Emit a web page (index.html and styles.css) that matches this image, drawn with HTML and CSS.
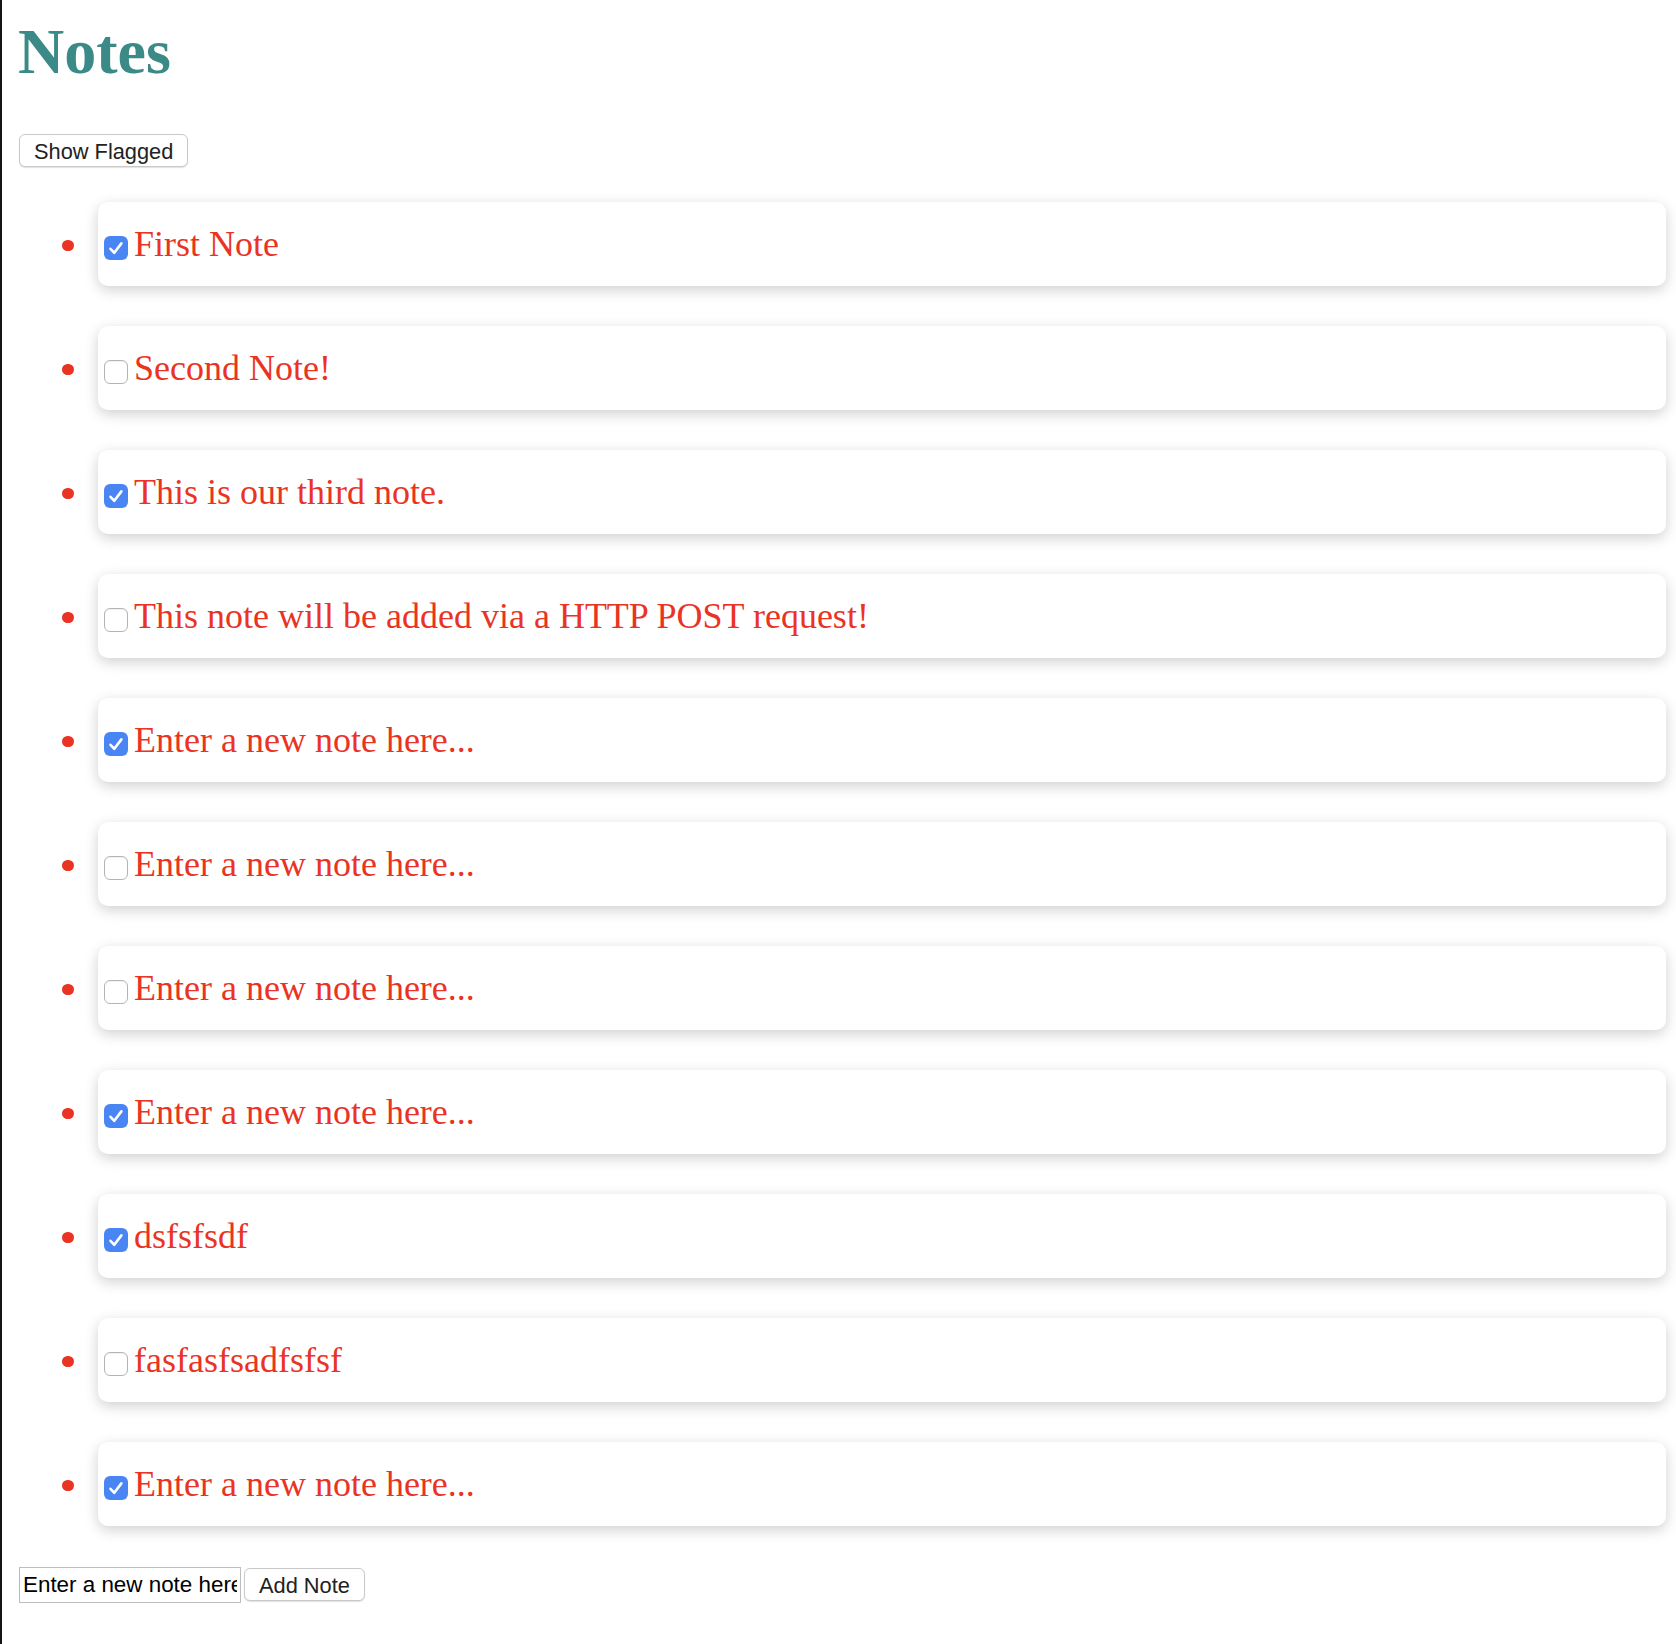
FILE: index.html
```html
<!DOCTYPE html>
<html lang="en">
<head>
<meta charset="utf-8">
<title>Notes</title>
<link rel="stylesheet" href="styles.css">
</head>
<body>
<h1 class="title">Notes</h1>
<button class="btn btn-flag" type="button">Show Flagged</button>
<ul class="notes">
  <li class="note"><div class="card"><span class="box checked"><svg viewBox="0 0 24 24" width="24" height="24"><path d="M6.5 12.8 L10.3 16.8 L17.4 7.4" fill="none" stroke="#fff" stroke-width="2.6" stroke-linecap="round" stroke-linejoin="round"/></svg></span><span class="text">First Note</span></div></li>
  <li class="note"><div class="card"><span class="box"></span><span class="text">Second Note!</span></div></li>
  <li class="note"><div class="card"><span class="box checked"><svg viewBox="0 0 24 24" width="24" height="24"><path d="M6.5 12.8 L10.3 16.8 L17.4 7.4" fill="none" stroke="#fff" stroke-width="2.6" stroke-linecap="round" stroke-linejoin="round"/></svg></span><span class="text">This is our third note.</span></div></li>
  <li class="note"><div class="card"><span class="box"></span><span class="text">This note will be added via a HTTP POST request!</span></div></li>
  <li class="note"><div class="card"><span class="box checked"><svg viewBox="0 0 24 24" width="24" height="24"><path d="M6.5 12.8 L10.3 16.8 L17.4 7.4" fill="none" stroke="#fff" stroke-width="2.6" stroke-linecap="round" stroke-linejoin="round"/></svg></span><span class="text">Enter a new note here...</span></div></li>
  <li class="note"><div class="card"><span class="box"></span><span class="text">Enter a new note here...</span></div></li>
  <li class="note"><div class="card"><span class="box"></span><span class="text">Enter a new note here...</span></div></li>
  <li class="note"><div class="card"><span class="box checked"><svg viewBox="0 0 24 24" width="24" height="24"><path d="M6.5 12.8 L10.3 16.8 L17.4 7.4" fill="none" stroke="#fff" stroke-width="2.6" stroke-linecap="round" stroke-linejoin="round"/></svg></span><span class="text">Enter a new note here...</span></div></li>
  <li class="note"><div class="card"><span class="box checked"><svg viewBox="0 0 24 24" width="24" height="24"><path d="M6.5 12.8 L10.3 16.8 L17.4 7.4" fill="none" stroke="#fff" stroke-width="2.6" stroke-linecap="round" stroke-linejoin="round"/></svg></span><span class="text">dsfsfsdf</span></div></li>
  <li class="note"><div class="card"><span class="box"></span><span class="text">fasfasfsadfsfsf</span></div></li>
  <li class="note"><div class="card"><span class="box checked"><svg viewBox="0 0 24 24" width="24" height="24"><path d="M6.5 12.8 L10.3 16.8 L17.4 7.4" fill="none" stroke="#fff" stroke-width="2.6" stroke-linecap="round" stroke-linejoin="round"/></svg></span><span class="text">Enter a new note here...</span></div></li>
</ul>
<form class="add-form">
  <input class="note-input" type="text" value="Enter a new note here...">
  <button class="btn btn-add" type="button">Add Note</button>
</form>
</body>
</html>
```
FILE: styles.css
```css
html {
  background: #ffffff;
}
body {
  margin: 0;
  padding: 0 10px 0 16px;
  min-height: 100vh;
  box-sizing: border-box;
  border-left: 2px solid #141414;
  font-family: "Liberation Serif", "Times New Roman", serif;
  background: #ffffff;
}
.title {
  margin: 15px 0 45px;
  font-family: "Liberation Serif", "Times New Roman", serif;
  font-size: 64px;
  font-weight: bold;
  line-height: normal;
  color: #3b8a88;
}
.btn {
  display: block;
  height: 33px;
  padding: 2px 14px 0;
  margin: 0 0 0 1px;
  font-family: "Liberation Sans", Arial, sans-serif;
  font-size: 21.8px;
  color: #222222;
  background: #ffffff;
  border: 1px solid #c9c9c9;
  border-radius: 6px;
  box-shadow: 0 1px 1px rgba(0, 0, 0, 0.12);
  line-height: 29px;
}
.notes {
  list-style: none;
  margin: 35px 0 41px;
  padding: 0;
  display: flex;
  flex-direction: column;
  gap: 40px;
}
.note {
  display: flex;
  align-items: center;
}
.note::before {
  content: "";
  flex: none;
  width: 11.5px;
  height: 11.5px;
  margin: 3px 24.25px 0 44.25px;
  border-radius: 50%;
  background: #ea3323;
}
.card {
  flex: 1;
  display: flex;
  align-items: flex-start;
  height: 84px;
  box-sizing: border-box;
  padding: 21px 6px 23px;
  background: #ffffff;
  border-radius: 10px;
  box-shadow: 0 4px 14px rgba(0, 0, 0, 0.19);
}
.box {
  flex: none;
  display: block;
  width: 24px;
  height: 24px;
  margin: 13px 6px 0 0;
  box-sizing: border-box;
  border: 1.5px solid #b4b4b4;
  border-radius: 6px;
  background: #ffffff;
  box-shadow: inset 0 1px 1px rgba(0, 0, 0, 0.06);
}
.box.checked {
  border: none;
  background: #4a86f3;
  box-shadow: none;
}
.box svg {
  display: block;
}
.text {
  font-family: "Liberation Serif", "Times New Roman", serif;
  font-size: 36px;
  line-height: normal;
  color: #ea3323;
  white-space: nowrap;
}
.add-form {
  display: flex;
  align-items: flex-start;
  gap: 3px;
  margin: 0;
}
.note-input {
  width: 222px;
  height: 36px;
  box-sizing: border-box;
  margin: 0 0 0 1px;
  padding: 0 3px;
  font-family: "Liberation Sans", Arial, sans-serif;
  font-size: 22.4px;
  color: #000000;
  border: 1px solid #bdbdbd;
  border-radius: 0;
  outline: none;
}
.btn-add {
  margin: 1px 0 0;
}
```
